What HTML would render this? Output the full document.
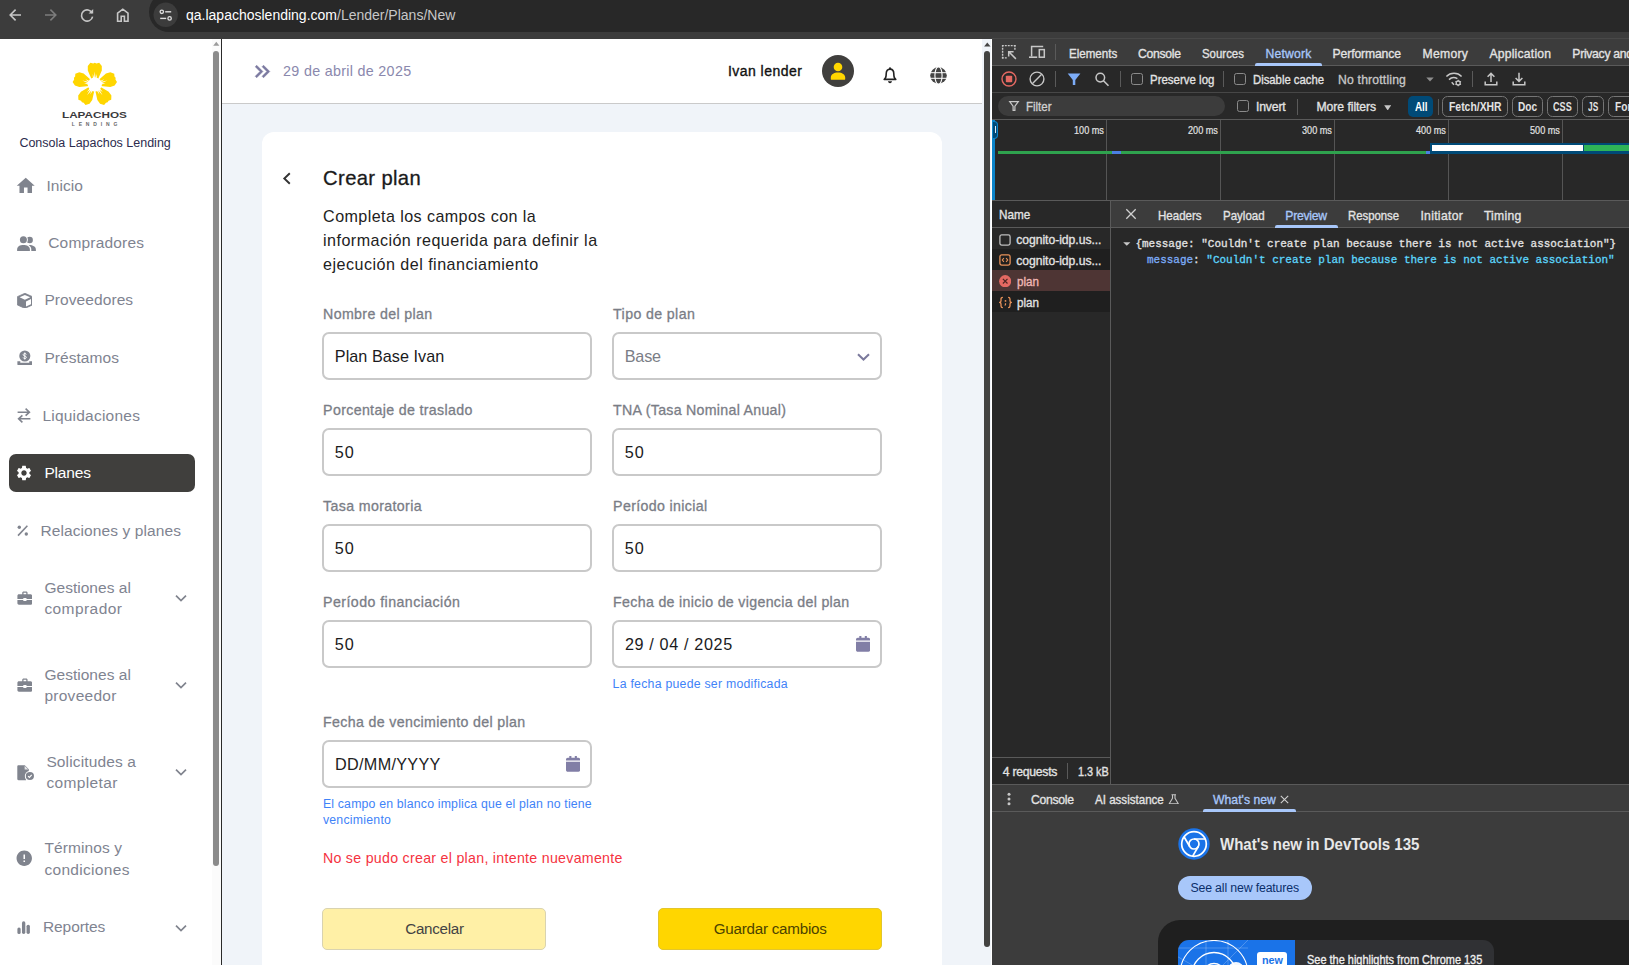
<!DOCTYPE html>
<html lang="es">
<head>
<meta charset="utf-8">
<title>Crear plan</title>
<style>
*{box-sizing:border-box;margin:0;padding:0}
html,body{width:1629px;height:965px;overflow:hidden;background:#fff;font-family:"Liberation Sans",sans-serif}
#root{position:absolute;left:0;top:0;width:1629px;height:965px;overflow:hidden}
.abs{position:absolute}
.t{position:absolute;white-space:nowrap;line-height:1}
</style>
</head>
<body>
<div id="root">
<div class="abs" style="left:0px;top:0px;width:1629px;height:39px;background:#3c3c3c;"></div>
<div class="abs" style="left:149px;top:-8px;width:1500px;height:40px;background:#282828;border-radius:20px;"></div>
<svg class="abs" style="left:0;top:0" width="200" height="39" viewBox="0 0 200 39" fill="none">
<path d="M21 15H10.5M15.6 9.6L10.2 15l5.4 5.4" stroke="#c7c7c7" stroke-width="1.6"/>
<path d="M45 15h10.5M50.4 9.6l5.4 5.4-5.4 5.4" stroke="#7c7c7c" stroke-width="1.6"/>
<path d="M92.2 13.2A5.6 5.6 0 1 0 92.6 16.6" stroke="#c7c7c7" stroke-width="1.6"/>
<path d="M93.2 9v4.600h-4.600z" fill="#c7c7c7"/>
<path d="M117.6 21.2v-8l5.200-4 5.200 4v8h-3.600v-5h-3.200v5z" stroke="#c7c7c7" stroke-width="1.6"/>
<circle cx="165.7" cy="14.8" r="12.2" fill="#3c3c3c"/>
<circle cx="161.8" cy="11.8" r="1.7" stroke="#dedede" stroke-width="1.3"/>
<path d="M165.2 11.8h6" stroke="#dedede" stroke-width="1.4"/>
<circle cx="169.6" cy="18.4" r="1.7" stroke="#dedede" stroke-width="1.3"/>
<path d="M160.2 18.4h6" stroke="#dedede" stroke-width="1.4"/>
</svg>
<div class="t" id="url" style="left:186px;top:8px;font-size:14px;color:#c7c7c7"><span style="color:#fff">qa.lapachoslending.com</span>/Lender/Plans/New</div>
<div class="abs" style="left:0px;top:39px;width:221px;height:926px;background:#fff;"></div>
<svg class="abs" style="left:60px;top:55px;" width="70" height="60" viewBox="0 0 70 60" fill="none"><g transform="translate(34.8,29.6)" fill="#ffd600"><path d="M-3.1,-5 L-7.0,-14.0 L-7.0,-18.6 L-4.4,-21.9 L-1.6,-21.2 L0,-21.9 L1.6,-21.2 L4.4,-21.9 L7.0,-18.6 L7.0,-14.0 L3.1,-5 Z" transform="rotate(0)"/><path d="M-3.1,-5 L-7.0,-14.0 L-7.0,-18.6 L-4.4,-21.9 L-1.6,-21.2 L0,-21.9 L1.6,-21.2 L4.4,-21.9 L7.0,-18.6 L7.0,-14.0 L3.1,-5 Z" transform="rotate(72)"/><path d="M-3.1,-5 L-7.0,-14.0 L-7.0,-18.6 L-4.4,-21.9 L-1.6,-21.2 L0,-21.9 L1.6,-21.2 L4.4,-21.9 L7.0,-18.6 L7.0,-14.0 L3.1,-5 Z" transform="rotate(144)"/><path d="M-3.1,-5 L-7.0,-14.0 L-7.0,-18.6 L-4.4,-21.9 L-1.6,-21.2 L0,-21.9 L1.6,-21.2 L4.4,-21.9 L7.0,-18.6 L7.0,-14.0 L3.1,-5 Z" transform="rotate(216)"/><path d="M-3.1,-5 L-7.0,-14.0 L-7.0,-18.6 L-4.4,-21.9 L-1.6,-21.2 L0,-21.9 L1.6,-21.2 L4.4,-21.9 L7.0,-18.6 L7.0,-14.0 L3.1,-5 Z" transform="rotate(288)"/><polygon points="0.00,-13.20 0.90,-5.00 -0.90,-5.00" fill="#fff"/><polygon points="2.06,-10.60 1.84,-4.74 0.07,-5.08" fill="#fff"/><polygon points="-2.06,-10.60 -0.07,-5.08 -1.84,-4.74" fill="#fff"/><polygon points="12.55,-4.08 5.03,-0.69 4.48,-2.40" fill="#fff"/><polygon points="10.72,-1.32 5.07,0.28 4.85,-1.50" fill="#fff"/><polygon points="9.45,-5.24 4.81,-1.64 3.94,-3.21" fill="#fff"/><polygon points="7.76,10.68 2.21,4.57 3.67,3.52" fill="#fff"/><polygon points="4.56,9.79 1.30,4.91 2.93,4.15" fill="#fff"/><polygon points="7.90,7.37 3.04,4.07 4.27,2.75" fill="#fff"/><polygon points="-7.76,10.68 -3.67,3.52 -2.21,4.57" fill="#fff"/><polygon points="-7.90,7.37 -4.27,2.75 -3.04,4.07" fill="#fff"/><polygon points="-4.56,9.79 -2.93,4.15 -1.30,4.91" fill="#fff"/><polygon points="-12.55,-4.08 -4.48,-2.40 -5.03,-0.69" fill="#fff"/><polygon points="-9.45,-5.24 -3.94,-3.21 -4.81,-1.64" fill="#fff"/><polygon points="-10.72,-1.32 -4.85,-1.50 -5.07,0.28" fill="#fff"/><circle r="7.1" fill="#fff"/></g></svg>
<div class="t" style="left:62.1px;top:110.6px;font-size:8.8px;font-weight:bold;color:#3a3a3c;transform-origin:0 0;transform:scaleX(1.332)">LAPACHOS</div>
<div class="t" style="left:71.8px;top:121.6px;font-size:5px;font-weight:bold;color:#6a6a6a;letter-spacing:3.83px">LENDING</div>
<div class="t" style="left:19.4px;top:137.22px;font-size:12.5px;color:#2c2c4e;letter-spacing:-0.005px;">Consola Lapachos Lending</div>
<svg class="abs" style="left:14.8px;top:175.2px;" width="21.5" height="21.5" viewBox="0 0 24 24" fill="#80848e"><path d="M10 20v-6h4v6h5v-8h3L12 3 2 12h3v8z"/></svg>
<svg class="abs" style="left:16px;top:234px;" width="21" height="18" viewBox="0 0 21 18" fill="#80848e"><circle cx="13.700" cy="6" r="3.200"/><circle cx="7.400" cy="5.700" r="4.500" fill="#fff"/><circle cx="7.400" cy="5.700" r="3.500"/><path d="M1.100 16.900v-1.200C1.100 12.500 4 11.100 7.400 11.100s6.500 1.400 6.500 4.600v1.200z"/><path d="M12.600 11.100c3.900-.2 7.300 1.400 7.300 4.600v1.200h-4.600v-1.500c0-1.700-.9-3.200-2.700-4.300z"/></svg>
<svg class="abs" style="left:16.6px;top:292.6px;" width="15.8" height="15.8" viewBox="0 0 16 16" fill="#80848e"><path d="M8 .3L15.600 3.700v8.400L8 15.600.4 12.100V3.700z" stroke-linejoin="round" stroke="#80848e" stroke-width=".8"/><path d="M8 1.900l5.400 2.400L8 6.800 2.600 4.300z" fill="#fff"/><path d="M9.100 8.500l5.100-2.400v5.200l-5.100 2.400z" fill="#fff"/></svg>
<svg class="abs" style="left:16.8px;top:349.7px;" width="15.6" height="15.6" viewBox="0 0 16 16" fill="#80848e"><circle cx="8" cy="6.200" r="5.700"/><path d="M.4 11.500h3v1.700h9.200v-1.700h3v3.100c0 .6-.5 1.100-1.100 1.100H1.500c-.6 0-1.100-.5-1.100-1.100z"/><path d="M9.600 4.600c-.2-.7-.9-1-1.600-1-.9 0-1.600.5-1.600 1.300 0 1.700 3.200.9 3.200 2.600 0 .8-.7 1.300-1.600 1.300-.8 0-1.500-.4-1.700-1.100M8 2.600v7.200" stroke="#fff" stroke-width="1" fill="none"/></svg>
<svg class="abs" style="left:16.8px;top:408.4px;" width="14" height="15" viewBox="0 0 14 15" fill="none"><path d="M.6 4.200h11.800M8.600 .7l3.800 3.500-3.800 3.500M13.400 10.800H1.600M5.400 7.300L1.600 10.800l3.800 3.500" stroke="#80848e" stroke-width="1.600" fill="none"/></svg>
<div class="abs" style="left:9px;top:454px;width:186px;height:38px;background:#403f3d;border-radius:7px;"></div>
<svg class="abs" style="left:15.4px;top:463.7px;" width="18" height="18" viewBox="0 0 24 24" fill="#fff"><path d="M19.14 12.94c.04-.3.06-.61.06-.94 0-.32-.02-.64-.07-.94l2.03-1.58c.18-.14.23-.41.12-.61l-1.92-3.320c-.12-.22-.37-.29-.59-.22l-2.39.96c-.5-.38-1.03-.7-1.62-.94l-.36-2.54c-.04-.24-.24-.41-.48-.41h-3.84c-.24 0-.43.17-.47.41l-.36 2.54c-.59.24-1.13.57-1.62.94l-2.39-.96c-.22-.08-.47 0-.59.22L2.740 8.870c-.12.21-.08.47.12.61l2.030 1.580c-.05.3-.09.63-.09.94s.02.64.07.94l-2.030 1.580c-.18.14-.23.41-.12.61l1.920 3.320c.12.22.37.29.59.22l2.390-.96c.5.38 1.030.7 1.620.94l.36 2.540c.05.24.24.41.48.41h3.840c.24 0 .44-.17.470-.41l.36-2.540c.59-.24 1.130-.56 1.620-.94l2.390.96c.22.08.47 0 .59-.22l1.920-3.320c.12-.22.07-.47-.12-.61l-2.010-1.580zM12 15.600c-1.980 0-3.600-1.620-3.600-3.600s1.620-3.600 3.600-3.600 3.600 1.620 3.600 3.600-1.620 3.600-3.600 3.600z"/></svg>
<svg class="abs" style="left:16.8px;top:525.2px;" width="11.4" height="11.4" viewBox="0 0 11.4 11.4" fill="#80848e"><circle cx="2.300" cy="2.300" r="1.700"/><circle cx="9.300" cy="9.000" r="1.700"/><path d="M1 10.600L10.400.8" stroke="#80848e" stroke-width="1.600"/></svg>
<svg class="abs" style="left:16.7px;top:591.0px;" width="15.8" height="14.3" viewBox="0 0 16 14.5" fill="#80848e"><path d="M5.300 3.200V1.900C5.300 1.100 5.900.5 6.700.5h2.600c.8 0 1.400.6 1.400 1.400v1.300h3.100c.8 0 1.500.7 1.500 1.500v3.400H9.600V7.200H6.400v.900H.4V4.700c0-.8.700-1.500 1.500-1.500zm1.300 0h2.800V1.900H6.600z"/><path d="M.4 9.200h6v.9h3.200v-.9h6v3.300c0 .8-.7 1.500-1.500 1.500H1.900c-.8 0-1.500-.7-1.500-1.500z"/></svg>
<svg class="abs" style="left:16.7px;top:678.0px;" width="15.8" height="14.3" viewBox="0 0 16 14.5" fill="#80848e"><path d="M5.300 3.200V1.900C5.300 1.100 5.900.5 6.700.5h2.600c.8 0 1.400.6 1.400 1.400v1.300h3.100c.8 0 1.500.7 1.500 1.500v3.400H9.600V7.200H6.400v.900H.4V4.700c0-.8.700-1.500 1.500-1.500zm1.300 0h2.800V1.900H6.600z"/><path d="M.4 9.200h6v.9h3.200v-.9h6v3.300c0 .8-.7 1.500-1.500 1.500H1.900c-.8 0-1.500-.7-1.500-1.500z"/></svg>
<svg class="abs" style="left:16.8px;top:764.6px;" width="18.2" height="16.2" viewBox="0 0 18.2 16.2" fill="#80848e"><path d="M1.500 .3h6.300l4 4v4.500a4.800 4.800 0 0 0-2.700 6.500H1.500c-.7 0-1.200-.5-1.200-1.200V1.500c0-.7.5-1.200 1.200-1.200z"/><path d="M7.600 .8v3.700h3.700z" fill="#fff" opacity=".8"/><circle cx="12.900" cy="11.000" r="5.100" fill="#fff"/><circle cx="12.900" cy="11.000" r="4.100"/><path d="M11.100 11.100l1.300 1.300 2.300-2.500" stroke="#fff" stroke-width="1.100" fill="none"/></svg>
<svg class="abs" style="left:15.35px;top:849.25px;" width="18.5" height="18.5" viewBox="0 0 24 24" fill="#80848e"><path d="M12 2C6.480 2 2 6.480 2 12s4.480 10 10 10 10-4.480 10-10S17.520 2 12 2zm1 15h-2v-2h2v2zm0-4h-2V7h2v6z"/></svg>
<svg class="abs" style="left:16.9px;top:921.0px;" width="13.2" height="13.2" viewBox="0 0 13 13" fill="#80848e"><rect x=".4" y="6.400" width="3.200" height="6.400" rx="1.500"/><rect x="4.900" y=".3" width="3.300" height="12.500" rx="1.600"/><rect x="9.400" y="3.600" width="3.300" height="9.200" rx="1.600"/></svg>
<svg class="abs" style="left:174.5px;top:594.1px;" width="12" height="9" viewBox="0 0 12 9" fill="none"><path d="M1 1.600l5 5 5-5" stroke="#80848e" stroke-width="1.700"/></svg>
<svg class="abs" style="left:174.5px;top:681.1px;" width="12" height="9" viewBox="0 0 12 9" fill="none"><path d="M1 1.600l5 5 5-5" stroke="#80848e" stroke-width="1.700"/></svg>
<svg class="abs" style="left:174.5px;top:768.1px;" width="12" height="9" viewBox="0 0 12 9" fill="none"><path d="M1 1.600l5 5 5-5" stroke="#80848e" stroke-width="1.700"/></svg>
<svg class="abs" style="left:174.5px;top:923.5px;" width="12" height="9" viewBox="0 0 12 9" fill="none"><path d="M1 1.600l5 5 5-5" stroke="#80848e" stroke-width="1.700"/></svg>
<div class="t" style="left:46.4px;top:177.68px;font-size:15.5px;color:#7f8491;letter-spacing:0.063px;">Inicio</div>
<div class="t" style="left:48.2px;top:234.68px;font-size:15.5px;color:#7f8491;letter-spacing:0.190px;">Compradores</div>
<div class="t" style="left:44.4px;top:292.18px;font-size:15.5px;color:#7f8491;letter-spacing:0.082px;">Proveedores</div>
<div class="t" style="left:44.4px;top:349.68px;font-size:15.5px;color:#7f8491;letter-spacing:0.053px;">Préstamos</div>
<div class="t" style="left:42.4px;top:407.88px;font-size:15.5px;color:#7f8491;letter-spacing:0.226px;">Liquidaciones</div>
<div class="t" style="left:44.4px;top:464.68px;font-size:15.5px;color:#fff;letter-spacing:-0.179px;">Planes</div>
<div class="t" style="left:40.4px;top:523.08px;font-size:15.5px;color:#7f8491;letter-spacing:0.099px;">Relaciones y planes</div>
<div class="t" style="left:44.4px;top:579.78px;font-size:15.5px;color:#7f8491;letter-spacing:0.031px;">Gestiones al</div>
<div class="t" style="left:44.4px;top:600.68px;font-size:15.5px;color:#7f8491;letter-spacing:0.427px;">comprador</div>
<div class="t" style="left:44.4px;top:666.68px;font-size:15.5px;color:#7f8491;letter-spacing:0.031px;">Gestiones al</div>
<div class="t" style="left:44.4px;top:687.58px;font-size:15.5px;color:#7f8491;letter-spacing:0.276px;">proveedor</div>
<div class="t" style="left:46.4px;top:753.88px;font-size:15.5px;color:#7f8491;letter-spacing:0.135px;">Solicitudes a</div>
<div class="t" style="left:46.4px;top:774.78px;font-size:15.5px;color:#7f8491;letter-spacing:0.368px;">completar</div>
<div class="t" style="left:44.4px;top:839.58px;font-size:15.5px;color:#7f8491;letter-spacing:0.094px;">Términos y</div>
<div class="t" style="left:44.4px;top:861.58px;font-size:15.5px;color:#7f8491;letter-spacing:0.314px;">condiciones</div>
<div class="t" style="left:43px;top:919.08px;font-size:15.5px;color:#7f8491;letter-spacing:-0.099px;">Reportes</div>
<div class="abs" style="left:211.5px;top:39px;width:9.5px;height:926px;background:#fbfbfb;"></div>
<div class="abs" style="left:212.8px;top:51px;width:6.2px;height:815.4px;background:#8b8b8b;border-radius:3.100px;"></div>
<svg class="abs" style="left:213px;top:41px" width="7" height="6" viewBox="0 0 7 6"><path d="M3.300 .800L6.400 4.800H.2z" fill="#9b9b9b"/></svg>
<div class="abs" style="left:221px;top:39px;width:1.3px;height:926px;background:#2a2a2a;"></div>
<div class="abs" style="left:222.3px;top:39px;width:769px;height:926px;background:#f0f4f9;"></div>
<div class="abs" style="left:222.3px;top:39px;width:760px;height:64px;background:#fff;"></div>
<div class="abs" style="left:222.3px;top:103px;width:760px;height:1px;background:#cacaca;"></div>
<svg class="abs" style="left:250px;top:58.8px;" width="25" height="25" viewBox="0 0 24 24" fill="#7b79a0"><path stroke="#7b79a0" stroke-width=".5" d="M6.410 6L5 7.410 9.580 12 5 16.590 6.410 18l6-6z M13 6l-1.410 1.410L16.170 12l-4.580 4.590L13 18l6-6z"/></svg>
<div class="t" style="left:283.1px;top:63.90px;font-size:14.3px;color:#8a88ad;letter-spacing:0.310px;">29 de abril de 2025</div>
<div class="t" style="left:727.9px;top:64.25px;font-size:14px;color:#111;letter-spacing:0.463px;-webkit-text-stroke:.35px #111;">Ivan lender</div>
<div class="abs" style="left:821.700px;top:54.800px;width:32.400px;height:32.400px;border-radius:50%;background:#403f3d"></div>
<svg class="abs" style="left:829.9px;top:62px;" width="16" height="18" viewBox="0 0 16 18" fill="#ffd600"><circle cx="8" cy="5" r="4.300"/><path d="M.8 17.200v-1.600c0-3 3.200-5 7.200-5s7.200 2 7.200 5v1.600c0 .3-.2.500-.5.500H1.300c-.3 0-.5-.2-.5-.5z"/></svg>
<svg class="abs" style="left:883px;top:66.6px;" width="14" height="17" viewBox="0 0 14 17" fill="none"><circle cx="7" cy="1.200" r="1" fill="#222"/><path d="M1.200 12.400L2.700 10.500C3.100 9.200 3.200 8 3.200 6.800 3.200 3.900 4.700 2.100 7 2.100s3.800 1.800 3.800 4.700c0 1.200.1 2.400.5 3.700l1.500 1.900z" stroke="#222" stroke-width="1.600" stroke-linejoin="round"/><path d="M5 14.300h4c0 1.100-.9 1.900-2 1.900s-2-.8-2-1.900z" fill="#222"/></svg>
<svg class="abs" style="left:929.6px;top:66.5px;" width="17" height="17" viewBox="0 0 17 17" fill="none"><circle cx="8.500" cy="8.500" r="8.300" fill="#444"/><path d="M0 5.700h17M0 11.300h17" stroke="#fff" stroke-width="1"/><ellipse cx="8.500" cy="8.500" rx="3.600" ry="8.800" stroke="#fff" stroke-width="1.100"/></svg>
<div class="abs" style="left:261.8px;top:131.8px;width:680.4px;height:900px;background:#fff;border-radius:12px;"></div>
<svg class="abs" style="left:281px;top:171.5px;" width="13" height="13" viewBox="0 0 13 13" fill="none"><path d="M8.800 1.200L3.300 6.500l5.500 5.300" stroke="#333" stroke-width="1.900"/></svg>
<div class="t" style="left:323.1px;top:167.60px;font-size:20.2px;color:#1a1a1a;letter-spacing:0.372px;-webkit-text-stroke:.3px #1a1a1a;">Crear plan</div>
<div class="t" style="left:323.1px;top:208.17px;font-size:16.1px;color:#222;letter-spacing:0.418px;">Completa los campos con la</div>
<div class="t" style="left:323.1px;top:232.17px;font-size:16.1px;color:#222;letter-spacing:0.454px;">información requerida para definir la</div>
<div class="t" style="left:323.1px;top:256.17px;font-size:16.1px;color:#222;letter-spacing:0.474px;">ejecución del financiamiento</div>
<div class="t" style="left:323.1px;top:306.98px;font-size:14.2px;color:#7a7d86;letter-spacing:0.357px;-webkit-text-stroke:.3px #7a7d86;">Nombre del plan</div>
<div class="t" style="left:613.1px;top:306.98px;font-size:14.2px;color:#7a7d86;letter-spacing:0.376px;-webkit-text-stroke:.3px #7a7d86;">Tipo de plan</div>
<div class="abs" style="left:322px;top:332px;width:270px;height:48px;border:2px solid #c9c9c9;border-radius:7px;background:#fff"></div>
<div class="abs" style="left:612px;top:332px;width:270px;height:48px;border:2px solid #c9c9c9;border-radius:7px;background:#fff"></div>
<div class="t" style="left:334.8px;top:348.29px;font-size:16.2px;color:#1b1b1d;letter-spacing:0.047px;">Plan Base Ivan</div>
<div class="t" style="left:624.8px;top:348.29px;font-size:16.2px;color:#7a7d86;letter-spacing:-0.232px;">Base</div>
<svg class="abs" style="left:856.6px;top:352.7px;" width="13" height="8" viewBox="0 0 13 8" fill="none"><path d="M1 1.200l5.500 5.300L12 1.200" stroke="#7b799c" stroke-width="2"/></svg>
<div class="t" style="left:323.1px;top:402.98px;font-size:14.2px;color:#7a7d86;letter-spacing:0.345px;-webkit-text-stroke:.3px #7a7d86;">Porcentaje de traslado</div>
<div class="t" style="left:613.1px;top:402.98px;font-size:14.2px;color:#7a7d86;letter-spacing:0.281px;-webkit-text-stroke:.3px #7a7d86;">TNA (Tasa Nominal Anual)</div>
<div class="abs" style="left:322px;top:428px;width:270px;height:48px;border:2px solid #c9c9c9;border-radius:7px;background:#fff"></div>
<div class="abs" style="left:612px;top:428px;width:270px;height:48px;border:2px solid #c9c9c9;border-radius:7px;background:#fff"></div>
<div class="t" style="left:334.8px;top:444.29px;font-size:16.2px;color:#1b1b1d;letter-spacing:0.995px;">50</div>
<div class="t" style="left:624.8px;top:444.29px;font-size:16.2px;color:#1b1b1d;letter-spacing:0.995px;">50</div>
<div class="t" style="left:323.1px;top:498.98px;font-size:14.2px;color:#7a7d86;letter-spacing:0.359px;-webkit-text-stroke:.3px #7a7d86;">Tasa moratoria</div>
<div class="t" style="left:613.1px;top:498.98px;font-size:14.2px;color:#7a7d86;letter-spacing:0.349px;-webkit-text-stroke:.3px #7a7d86;">Período inicial</div>
<div class="abs" style="left:322px;top:524px;width:270px;height:48px;border:2px solid #c9c9c9;border-radius:7px;background:#fff"></div>
<div class="abs" style="left:612px;top:524px;width:270px;height:48px;border:2px solid #c9c9c9;border-radius:7px;background:#fff"></div>
<div class="t" style="left:334.8px;top:540.29px;font-size:16.2px;color:#1b1b1d;letter-spacing:0.995px;">50</div>
<div class="t" style="left:624.8px;top:540.29px;font-size:16.2px;color:#1b1b1d;letter-spacing:0.995px;">50</div>
<div class="t" style="left:323.1px;top:594.98px;font-size:14.2px;color:#7a7d86;letter-spacing:0.434px;-webkit-text-stroke:.3px #7a7d86;">Período financiación</div>
<div class="t" style="left:613.1px;top:594.98px;font-size:14.2px;color:#7a7d86;letter-spacing:0.323px;-webkit-text-stroke:.3px #7a7d86;">Fecha de inicio de vigencia del plan</div>
<div class="abs" style="left:322px;top:620px;width:270px;height:48px;border:2px solid #c9c9c9;border-radius:7px;background:#fff"></div>
<div class="abs" style="left:612px;top:620px;width:270px;height:48px;border:2px solid #c9c9c9;border-radius:7px;background:#fff"></div>
<div class="t" style="left:334.8px;top:636.29px;font-size:16.2px;color:#1b1b1d;letter-spacing:0.995px;">50</div>
<div class="t" style="left:624.9px;top:636.29px;font-size:16.2px;color:#1b1b1d;letter-spacing:0.638px;">29 / 04 / 2025</div>
<svg class="abs" style="left:856px;top:636.2px;" width="14.2" height="15.8" viewBox="0 0 14.2 15.8" fill="#817ea6"><path d="M3.300 0h2.100v1.800h3.400V0h2.100v1.800h1.500c1 0 1.800.8 1.800 1.800v.900H0v-.900c0-1 .8-1.800 1.800-1.800h1.500z"/><path d="M0 5.700h14.200v8.300c0 1-.8 1.800-1.800 1.800H1.800c-1 0-1.800-.8-1.800-1.800z"/></svg>
<div class="t" style="left:612.6px;top:678.29px;font-size:12.3px;color:#3f83f8;letter-spacing:0.244px;">La fecha puede ser modificada</div>
<div class="t" style="left:323.1px;top:715.08px;font-size:14.2px;color:#7a7d86;letter-spacing:0.341px;-webkit-text-stroke:.3px #7a7d86;">Fecha de vencimiento del plan</div>
<div class="abs" style="left:322px;top:740px;width:270px;height:48px;border:2px solid #c9c9c9;border-radius:7px;background:#fff"></div>
<div class="t" style="left:335px;top:755.99px;font-size:16.2px;color:#222;letter-spacing:0.319px;">DD/MM/YYYY</div>
<svg class="abs" style="left:566.1px;top:756px;" width="14.2" height="15.8" viewBox="0 0 14.2 15.8" fill="#817ea6"><path d="M3.300 0h2.100v1.800h3.400V0h2.100v1.800h1.500c1 0 1.800.8 1.800 1.800v.900H0v-.900c0-1 .8-1.800 1.800-1.800h1.500z"/><path d="M0 5.700h14.200v8.300c0 1-.8 1.800-1.800 1.800H1.800c-1 0-1.800-.8-1.800-1.800z"/></svg>
<div class="t" style="left:322.9px;top:798.39px;font-size:12.3px;color:#3f83f8;letter-spacing:0.182px;">El campo en blanco implica que el plan no tiene</div>
<div class="t" style="left:322.9px;top:814.39px;font-size:12.3px;color:#3f83f8;letter-spacing:0.238px;">vencimiento</div>
<div class="t" style="left:322.9px;top:850.78px;font-size:14.2px;color:#f5333f;letter-spacing:0.289px;">No se pudo crear el plan, intente nuevamente</div>
<div class="abs" style="left:322px;top:908px;width:224px;height:42px;border:1px solid #d9d3b0;border-radius:5px;background:#fff0a6"></div>
<div class="abs" style="left:658px;top:908px;width:224px;height:42px;border:1px solid #e3c62c;border-radius:5px;background:#ffd600"></div>
<div class="t" style="left:405.3px;top:921.43px;font-size:15.2px;color:#444;letter-spacing:-0.297px;">Cancelar</div>
<div class="t" style="left:713.8px;top:921.43px;font-size:15.2px;color:#4d4300;letter-spacing:-0.249px;">Guardar cambios</div>
<div class="abs" style="left:982px;top:39px;width:9px;height:926px;background:#f0f4f9;"></div>
<svg class="abs" style="left:984px;top:42px" width="7" height="6" viewBox="0 0 7 6"><path d="M3.300 .600L6.500 4.600H.1z" fill="#444"/></svg>
<div class="abs" style="left:984px;top:51px;width:6px;height:895.8px;background:#434341;border-radius:3px;"></div>
<div class="abs" style="left:990.8px;top:39px;width:1.5px;height:926px;background:#fff;"></div>
<div class="abs" style="left:992.2px;top:39px;width:637px;height:926px;background:#282828;"></div>
<div class="abs" style="left:992.2px;top:39px;width:637px;height:26.4px;background:#3c3c3c;"></div>
<div class="abs" style="left:992.2px;top:38px;width:637px;height:1px;background:#484848;"></div>
<div class="abs" style="left:992.2px;top:65.2px;width:637px;height:1px;background:#5a5a5a;"></div>
<svg class="abs" style="left:1000px;top:43px;" width="18" height="18" viewBox="0 0 18 18" fill="none"><path d="M1.900 2.600H15.600M2.600 1.900V15.600" stroke="#c7c7c7" stroke-width="1.400" stroke-dasharray="1.900 1.050"/><path d="M14.900 1.900V6.750M1.900 14.900H6.750" stroke="#c7c7c7" stroke-width="1.400" stroke-dasharray="1.900 1.050"/><path d="M9.300 9.300l6.600 6.600M8.700 13.600V8.700h4.900" stroke="#c7c7c7" stroke-width="1.500"/></svg>
<svg class="abs" style="left:1028px;top:44px;" width="18" height="16" viewBox="0 0 18 16" fill="none"><path d="M3.600 12.400V2.500h11.600" stroke="#c7c7c7" stroke-width="1.500"/><path d="M1 13.200h8.200" stroke="#c7c7c7" stroke-width="1.600"/><rect x="11.300" y="5.600" width="5" height="7.600" stroke="#c7c7c7" stroke-width="1.500"/></svg>
<div class="abs" style="left:1055.2px;top:44px;width:1px;height:15.6px;background:#5a5a5a;"></div>
<div class="t" style="left:1068.6px;top:47.87px;font-size:12.2px;color:#e3e3e3;transform-origin:0 50%;transform:scaleX(0.9488);-webkit-text-stroke:0.32px #e3e3e3;">Elements</div>
<div class="t" style="left:1138px;top:47.87px;font-size:12.2px;color:#e3e3e3;letter-spacing:-0.286px;-webkit-text-stroke:0.32px #e3e3e3;">Console</div>
<div class="t" style="left:1202.2px;top:47.87px;font-size:12.2px;color:#e3e3e3;transform-origin:0 50%;transform:scaleX(0.9372);-webkit-text-stroke:0.32px #e3e3e3;">Sources</div>
<div class="t" style="left:1265.5px;top:47.87px;font-size:12.2px;color:#a8c7fa;letter-spacing:0.184px;-webkit-text-stroke:0.32px #a8c7fa;">Network</div>
<div class="abs" style="left:1255.3px;top:62.6px;width:66.5px;height:3px;background:#a8c7fa;border-radius:2px 2px 0 0;"></div>
<div class="t" style="left:1332.6px;top:47.87px;font-size:12.2px;color:#e3e3e3;letter-spacing:-0.137px;-webkit-text-stroke:0.32px #e3e3e3;">Performance</div>
<div class="t" style="left:1422.6px;top:47.87px;font-size:12.2px;color:#e3e3e3;letter-spacing:0.237px;-webkit-text-stroke:0.32px #e3e3e3;">Memory</div>
<div class="t" style="left:1489.4px;top:47.87px;font-size:12.2px;color:#e3e3e3;letter-spacing:0.208px;-webkit-text-stroke:0.32px #e3e3e3;">Application</div>
<div class="t" style="left:1572.3px;top:47.87px;font-size:12.2px;color:#e3e3e3;letter-spacing:-0.292px;-webkit-text-stroke:0.32px #e3e3e3;">Privacy and security</div>
<div class="abs" style="left:992.2px;top:92.2px;width:637px;height:1px;background:#474747;"></div>
<svg class="abs" style="left:1000px;top:70px;" width="18" height="18" viewBox="0 0 18 18" fill="none"><circle cx="9" cy="9" r="7" stroke="#e46962" stroke-width="1.400"/><rect x="5.800" y="5.800" width="6.400" height="6.400" rx=".8" fill="#e46962"/></svg>
<svg class="abs" style="left:1028px;top:70px;" width="18" height="18" viewBox="0 0 18 18" fill="none"><circle cx="9" cy="9" r="6.900" stroke="#c7c7c7" stroke-width="1.400"/><path d="M4.300 13.700L13.700 4.300" stroke="#c7c7c7" stroke-width="1.400"/></svg>
<div class="abs" style="left:1055.2px;top:71px;width:1px;height:16px;background:#5a5a5a;"></div>
<svg class="abs" style="left:1066px;top:71px;" width="16" height="16" viewBox="0 0 16 16" fill="none"><path d="M1.700 2.400h12.700L9.300 8.900v5H6.800v-5z" fill="#7cacf8"/></svg>
<svg class="abs" style="left:1094px;top:71px;" width="16" height="16" viewBox="0 0 16 16" fill="none"><circle cx="6.300" cy="6.600" r="4.300" stroke="#c7c7c7" stroke-width="1.500"/><path d="M9.500 9.800l5 5" stroke="#c7c7c7" stroke-width="1.600"/></svg>
<div class="abs" style="left:1120.4px;top:71px;width:1px;height:16px;background:#5a5a5a;"></div>
<div class="abs" style="left:1131px;top:73.3px;width:12px;height:12px;border:1.2px solid #8a8a8a;border-radius:2.500px;background:#2b2b2b"></div>
<div class="t" style="left:1149.6px;top:74.17px;font-size:12.2px;color:#e3e3e3;transform-origin:0 50%;transform:scaleX(0.9413);-webkit-text-stroke:0.32px #e3e3e3;">Preserve log</div>
<div class="abs" style="left:1223px;top:71px;width:1px;height:16px;background:#5a5a5a;"></div>
<div class="abs" style="left:1234.2px;top:73.3px;width:12px;height:12px;border:1.2px solid #8a8a8a;border-radius:2.500px;background:#2b2b2b"></div>
<div class="t" style="left:1252.7px;top:74.17px;font-size:12.2px;color:#e3e3e3;transform-origin:0 50%;transform:scaleX(0.9275);-webkit-text-stroke:0.32px #e3e3e3;">Disable cache</div>
<div class="t" style="left:1338.1px;top:74.17px;font-size:12.2px;color:#c7c7c7;letter-spacing:0.174px;-webkit-text-stroke:0.32px #c7c7c7;">No throttling</div>
<svg class="abs" style="left:1426px;top:77px;" width="8" height="5" viewBox="0 0 8 5" fill="none"><path d="M.3 .4h7.400L4 4.400z" fill="#8f8f8f"/></svg>
<svg class="abs" style="left:1445px;top:71px;" width="18" height="16" viewBox="0 0 18 16" fill="none"><path d="M1.400 5.600a10.500 10.500 0 0 1 15.200 0M4 8.600a6.800 6.800 0 0 1 8.400-.9" stroke="#c7c7c7" stroke-width="1.500"/><path d="M6.700 11.300L9 13.800" stroke="#c7c7c7" stroke-width="1.500"/><circle cx="13.200" cy="12" r="2" stroke="#c7c7c7" stroke-width="1.300"/><path d="M13.200 8.800v1.100M13.200 14.100v1.100M10.400 10.400l1 .6M15 13l1 .6M10.400 13.600l1-.6M15 11l1-.6" stroke="#c7c7c7" stroke-width="1.100"/></svg>
<div class="abs" style="left:1472.3px;top:71px;width:1px;height:16px;background:#5a5a5a;"></div>
<svg class="abs" style="left:1483px;top:71px;" width="16" height="16" viewBox="0 0 16 16" fill="none"><path d="M8 11V2.600M4.600 5.800L8 2.400l3.400 3.400" stroke="#c7c7c7" stroke-width="1.500"/><path d="M2.200 10.600v3.200h11.600v-3.200" stroke="#c7c7c7" stroke-width="1.500"/></svg>
<svg class="abs" style="left:1511px;top:71px;" width="16" height="16" viewBox="0 0 16 16" fill="none"><path d="M8 1.800v8.400M4.600 7L8 10.400 11.400 7" stroke="#c7c7c7" stroke-width="1.500"/><path d="M2.200 10.600v3.200h11.600v-3.200" stroke="#c7c7c7" stroke-width="1.500"/></svg>
<div class="abs" style="left:992.2px;top:118.6px;width:637px;height:1px;background:#5a5a5a;"></div>
<div class="abs" style="left:997.9px;top:96.4px;width:227px;height:19.8px;background:#3c3c3c;border-radius:10px;"></div>
<svg class="abs" style="left:1008px;top:100.3px;" width="12" height="12" viewBox="0 0 12 12" fill="none"><path d="M1.700 1.700h8.600L6.900 6.200v4.200H5.100V6.200z" stroke="#c7c7c7" stroke-width="1.200"/></svg>
<div class="t" style="left:1026.4px;top:100.87px;font-size:12.2px;color:#d0d0d0;transform-origin:0 50%;transform:scaleX(0.9416);-webkit-text-stroke:0.32px #d0d0d0;">Filter</div>
<div class="abs" style="left:1237px;top:100.2px;width:12px;height:12px;border:1.2px solid #8a8a8a;border-radius:2.500px;background:#2b2b2b"></div>
<div class="t" style="left:1255.9px;top:100.87px;font-size:12.2px;color:#e3e3e3;letter-spacing:-0.136px;-webkit-text-stroke:0.32px #e3e3e3;">Invert</div>
<div class="abs" style="left:1297.3px;top:99px;width:1px;height:16px;background:#5a5a5a;"></div>
<div class="t" style="left:1316.5px;top:100.87px;font-size:12.2px;color:#e3e3e3;letter-spacing:-0.052px;-webkit-text-stroke:0.32px #e3e3e3;">More filters</div>
<svg class="abs" style="left:1383.5px;top:104.6px;" width="7.4" height="5.8" viewBox="0 0 7.4 5.800" fill="none"><path d="M.2 .3h7L3.700 5.500z" fill="#c7c7c7"/></svg>
<div class="abs" style="left:1408.2px;top:96.4px;width:24.6px;height:20.2px;background:#004a77;border-radius:5px;"></div>
<div class="t" style="left:1414.7px;top:100.87px;font-size:12.2px;color:#fff;font-weight:bold;transform-origin:0 50%;transform:scaleX(0.8091);">All</div>
<div class="abs" style="left:1437.5px;top:99px;width:1px;height:16px;background:#5a5a5a;"></div>
<div class="abs" style="left:1442px;top:96.400px;width:65.8px;height:20.200px;border:1px solid #757575;border-radius:5.500px"></div>
<div class="t" style="left:1448.9px;top:100.87px;font-size:12.2px;color:#e3e3e3;font-weight:bold;transform-origin:0 50%;transform:scaleX(0.8536);">Fetch/XHR</div>
<div class="abs" style="left:1512.3px;top:96.400px;width:30.5px;height:20.200px;border:1px solid #757575;border-radius:5.500px"></div>
<div class="t" style="left:1517.8px;top:100.87px;font-size:12.2px;color:#e3e3e3;font-weight:bold;transform-origin:0 50%;transform:scaleX(0.8296);">Doc</div>
<div class="abs" style="left:1547.1px;top:96.400px;width:30.5px;height:20.200px;border:1px solid #757575;border-radius:5.500px"></div>
<div class="t" style="left:1553.2px;top:100.87px;font-size:12.2px;color:#e3e3e3;font-weight:bold;transform-origin:0 50%;transform:scaleX(0.7462);">CSS</div>
<div class="abs" style="left:1582.1px;top:96.400px;width:21.6px;height:20.200px;border:1px solid #757575;border-radius:5.500px"></div>
<div class="t" style="left:1588px;top:100.87px;font-size:12.2px;color:#e3e3e3;font-weight:bold;transform-origin:0 50%;transform:scaleX(0.6842);">JS</div>
<div class="abs" style="left:1608.2px;top:96.400px;width:40px;height:20.200px;border:1px solid #757575;border-radius:5.500px"></div>
<div class="t" style="left:1614.5px;top:100.87px;font-size:12.2px;color:#e3e3e3;font-weight:bold;transform-origin:0 50%;transform:scaleX(0.8336);">Font</div>
<div class="abs" style="left:1106.1px;top:119.6px;width:1px;height:80.4px;background:#555;"></div>
<div class="abs" style="left:1220.0px;top:119.6px;width:1px;height:80.4px;background:#555;"></div>
<div class="abs" style="left:1334.0px;top:119.6px;width:1px;height:80.4px;background:#555;"></div>
<div class="abs" style="left:1448.0px;top:119.6px;width:1px;height:80.4px;background:#555;"></div>
<div class="abs" style="left:1561.9px;top:119.6px;width:1px;height:80.4px;background:#555;"></div>
<div class="t" style="left:1074.1px;top:124.89px;font-size:11px;color:#e3e3e3;transform-origin:0 50%;transform:scaleX(0.8289);-webkit-text-stroke:0.2px #e3e3e3;">100 ms</div>
<div class="t" style="left:1188.0px;top:124.89px;font-size:11px;color:#e3e3e3;transform-origin:0 50%;transform:scaleX(0.8289);-webkit-text-stroke:0.2px #e3e3e3;">200 ms</div>
<div class="t" style="left:1302.0px;top:124.89px;font-size:11px;color:#e3e3e3;transform-origin:0 50%;transform:scaleX(0.8289);-webkit-text-stroke:0.2px #e3e3e3;">300 ms</div>
<div class="t" style="left:1416.0px;top:124.89px;font-size:11px;color:#e3e3e3;transform-origin:0 50%;transform:scaleX(0.8289);-webkit-text-stroke:0.2px #e3e3e3;">400 ms</div>
<div class="t" style="left:1529.9px;top:124.89px;font-size:11px;color:#e3e3e3;transform-origin:0 50%;transform:scaleX(0.8289);-webkit-text-stroke:0.2px #e3e3e3;">500 ms</div>
<div class="abs" style="left:992.2px;top:119.6px;width:3px;height:80.4px;background:#0b84c9;"></div>
<div class="abs" style="left:992.6px;top:120.8px;width:5.4px;height:18px;background:#004a77;border-radius:0 4px 4px 0;border:1px solid #0b84c9;border-left:none;"></div>
<div class="abs" style="left:994.6px;top:126px;width:1px;height:7px;background:#dfe9f5;"></div>
<div class="abs" style="left:998px;top:151px;width:428.3px;height:2.7px;background:#2fa24e;"></div>
<div class="abs" style="left:1111.5px;top:151px;width:9.6px;height:2.7px;background:#4b7fe3;"></div>
<div class="abs" style="left:1426.3px;top:151px;width:9.4px;height:2.7px;background:#4b7fe3;"></div>
<div class="abs" style="left:1430.4px;top:143.4px;width:200px;height:10.4px;background:#004a77;"></div>
<div class="abs" style="left:1432.4px;top:145.4px;width:150.8px;height:5.5px;background:#fff;"></div>
<div class="abs" style="left:1583.5px;top:145.4px;width:46px;height:5.5px;background:#2fb457;"></div>
<div class="abs" style="left:992.2px;top:199.8px;width:637px;height:1px;background:#5a5a5a;"></div>
<div class="abs" style="left:1111px;top:200.8px;width:518px;height:26.4px;background:#3c3c3c;"></div>
<div class="abs" style="left:992.2px;top:227.2px;width:637px;height:1px;background:#5a5a5a;"></div>
<div class="abs" style="left:1110px;top:200.8px;width:1px;height:583px;background:#5a5a5a;"></div>
<div class="t" style="left:998.5px;top:209.47px;font-size:12.2px;color:#e3e3e3;transform-origin:0 50%;transform:scaleX(0.9597);-webkit-text-stroke:0.32px #e3e3e3;">Name</div>
<svg class="abs" style="left:1125px;top:208.2px;" width="12" height="12" viewBox="0 0 12 12" fill="none"><path d="M1.300 1.300l9.400 9.400M10.700 1.300l-9.400 9.400" stroke="#d0d0d0" stroke-width="1.300"/></svg>
<div class="t" style="left:1157.6px;top:210.47px;font-size:12.2px;color:#e3e3e3;transform-origin:0 50%;transform:scaleX(0.9465);-webkit-text-stroke:0.32px #e3e3e3;">Headers</div>
<div class="t" style="left:1222.5px;top:210.47px;font-size:12.2px;color:#e3e3e3;transform-origin:0 50%;transform:scaleX(0.9445);-webkit-text-stroke:0.32px #e3e3e3;">Payload</div>
<div class="t" style="left:1285.3px;top:210.47px;font-size:12.2px;color:#a8c7fa;letter-spacing:-0.258px;-webkit-text-stroke:0.32px #a8c7fa;">Preview</div>
<div class="abs" style="left:1274.9px;top:224.6px;width:63.2px;height:3px;background:#a8c7fa;border-radius:2px 2px 0 0;"></div>
<div class="t" style="left:1348.3px;top:210.47px;font-size:12.2px;color:#e3e3e3;transform-origin:0 50%;transform:scaleX(0.9311);-webkit-text-stroke:0.32px #e3e3e3;">Response</div>
<div class="t" style="left:1420.4px;top:210.47px;font-size:12.2px;color:#e3e3e3;letter-spacing:0.304px;-webkit-text-stroke:0.32px #e3e3e3;">Initiator</div>
<div class="t" style="left:1483.9px;top:210.47px;font-size:12.2px;color:#e3e3e3;letter-spacing:0.237px;-webkit-text-stroke:0.32px #e3e3e3;">Timing</div>
<div class="abs" style="left:992.2px;top:249.15px;width:117.8px;height:20.85px;background:#1f1f1f;"></div>
<div class="abs" style="left:992.2px;top:270.0px;width:117.8px;height:20.85px;background:#4e3534;"></div>
<div class="abs" style="left:992.2px;top:290.85px;width:117.8px;height:20.85px;background:#1f1f1f;"></div>
<svg class="abs" style="left:999px;top:233.5px;" width="12" height="12" viewBox="0 0 12 12" fill="none"><rect x=".9" y=".9" width="10.200" height="10.200" rx="1.800" stroke="#bdbdbd" stroke-width="1.300"/></svg>
<svg class="abs" style="left:999px;top:254.3px;" width="12" height="12" viewBox="0 0 12 12" fill="none"><rect x=".9" y=".9" width="10.200" height="10.200" rx="1.800" stroke="#e8925a" stroke-width="1.300"/><path d="M4.900 4.200L3.300 6l1.600 1.800M7.100 4.200L8.700 6 7.100 7.800" stroke="#e8925a" stroke-width="1.100"/></svg>
<svg class="abs" style="left:998.8px;top:275.0px;" width="12.4" height="12.4" viewBox="0 0 12.400 12.400" fill="none"><circle cx="6.200" cy="6.200" r="6.100" fill="#e46962"/><path d="M3.900 3.900l4.600 4.600M8.500 3.900L3.900 8.500" stroke="#4e2624" stroke-width="1.200"/></svg>
<svg class="abs" style="left:998.6px;top:295.6px;" width="13" height="13" viewBox="0 0 13 13" fill="none"><path d="M3.900 1.300c-1.300 0-1.900.5-1.900 1.700v1.700c0 .9-.4 1.400-1.300 1.700.9.300 1.300.8 1.300 1.700V10c0 1.200.6 1.700 1.900 1.700M9.100 1.300c1.300 0 1.900.5 1.900 1.700v1.700c0 .9.400 1.400 1.300 1.700-.9.300-1.300.8-1.300 1.700V10c0 1.200-.6 1.700-1.900 1.700" stroke="#e8925a" stroke-width="1.300"/><circle cx="6.500" cy="4.900" r=".9" fill="#e8925a"/><path d="M6.500 7.300v1.200l-.7 1" stroke="#e8925a" stroke-width="1.200"/></svg>
<div class="t" style="left:1016.2px;top:234.17px;font-size:12.2px;color:#e3e3e3;letter-spacing:-0.046px;-webkit-text-stroke:0.32px #e3e3e3;">cognito-idp.us...</div>
<div class="t" style="left:1016.2px;top:254.97px;font-size:12.2px;color:#e3e3e3;letter-spacing:-0.046px;-webkit-text-stroke:0.32px #e3e3e3;">cognito-idp.us...</div>
<div class="t" style="left:1016.6px;top:276.27px;font-size:12.2px;color:#f2b8b5;transform-origin:0 50%;transform:scaleX(0.9548);-webkit-text-stroke:0.32px #f2b8b5;">plan</div>
<div class="t" style="left:1016.6px;top:297.17px;font-size:12.2px;color:#e3e3e3;transform-origin:0 50%;transform:scaleX(0.9548);-webkit-text-stroke:0.32px #e3e3e3;">plan</div>
<svg class="abs" style="left:1123.4px;top:241.8px;" width="7.6" height="4" viewBox="0 0 7.600 4" fill="none"><path d="M.2 .2h7.200L3.800 3.800z" fill="#c7c7c7"/></svg>
<div class="t" style="left:1135.4px;top:239.07px;font-size:11px;color:#e3e3e3;font-family:'Liberation Mono',monospace;letter-spacing:-.015px;-webkit-text-stroke:.3px;">{message: "Couldn't create plan because there is not active association"}</div>
<div class="t" style="left:1147px;top:255.07px;font-size:11px;color:#e3e3e3;font-family:'Liberation Mono',monospace;letter-spacing:-.015px;-webkit-text-stroke:.3px;"><span style="color:#7cacf8">message</span><span style="color:#e3e3e3">: </span><span style="color:#5cd5fb">"Couldn't create plan because there is not active association"</span></div>
<div class="abs" style="left:992.2px;top:757.4px;width:118.3px;height:1px;background:#5a5a5a;"></div>
<div class="t" style="left:1002.8px;top:766.27px;font-size:12.2px;color:#e3e3e3;letter-spacing:-0.257px;-webkit-text-stroke:0.32px #e3e3e3;">4 requests</div>
<div class="abs" style="left:1067px;top:763.4px;width:1px;height:15.6px;background:#5a5a5a;"></div>
<div class="t" style="left:1077.5px;top:766.27px;font-size:12.2px;color:#e3e3e3;transform-origin:0 50%;transform:scaleX(0.8914);-webkit-text-stroke:0.32px #e3e3e3;">1.3 kB</div>
<div class="abs" style="left:992.2px;top:784.3px;width:637px;height:181px;background:#3c3c3c;"></div>
<div class="abs" style="left:992.2px;top:784.3px;width:637px;height:1px;background:#5a5a5a;"></div>
<div class="abs" style="left:992.2px;top:811.2px;width:637px;height:1px;background:#5a5a5a;"></div>
<svg class="abs" style="left:1005.7px;top:791.5px;" width="6" height="14" viewBox="0 0 6 14" fill="none"><circle cx="3" cy="2.200" r="1.500" fill="#c7c7c7"/><circle cx="3" cy="7" r="1.500" fill="#c7c7c7"/><circle cx="3" cy="11.800" r="1.500" fill="#c7c7c7"/></svg>
<div class="t" style="left:1030.9px;top:794.17px;font-size:12.2px;color:#e3e3e3;letter-spacing:-0.253px;-webkit-text-stroke:0.32px #e3e3e3;">Console</div>
<div class="t" style="left:1095.2px;top:794.17px;font-size:12.2px;color:#e3e3e3;transform-origin:0 50%;transform:scaleX(0.9492);-webkit-text-stroke:0.32px #e3e3e3;">AI assistance</div>
<svg class="abs" style="left:1168px;top:793.6px;" width="11.5" height="10.5" viewBox="0 0 11.500 10.500" fill="none"><path d="M3.500 .7h4.500M4.500 .7v3.600L1.200 9.700h9.100L7 4.300V.7" stroke="#c7c7c7" stroke-width="1.100" stroke-linejoin="round"/></svg>
<div class="t" style="left:1213px;top:794.17px;font-size:12.2px;color:#a8c7fa;letter-spacing:0.032px;-webkit-text-stroke:0.32px #a8c7fa;">What's new</div>
<svg class="abs" style="left:1279.6px;top:794.8px;" width="9" height="9" viewBox="0 0 9 9" fill="none"><path d="M.8 .8l7.400 7.400M8.200 .8L.8 8.200" stroke="#d0d0d0" stroke-width="1.100"/></svg>
<div class="abs" style="left:1203.2px;top:809px;width:92.7px;height:3px;background:#a8c7fa;border-radius:2px 2px 0 0;"></div>
<svg class="abs" style="left:1178px;top:828.3px;" width="32" height="32" viewBox="0 0 32 32" fill="none"><circle cx="16" cy="16" r="15.700" fill="#1a73e8"/><circle cx="16" cy="16" r="12.300" stroke="#fff" stroke-width="1.700"/><circle cx="16" cy="16" r="5" stroke="#fff" stroke-width="1.700"/><path d="M16 11h11.300M11.700 18.500L6 8.700M20.300 18.500L14.700 28.200" stroke="#fff" stroke-width="1.700"/></svg>
<div class="t" style="left:1219.6px;top:836.96px;font-size:16px;color:#e8e8e8;font-weight:bold;transform-origin:0 50%;transform:scaleX(0.9386);">What's new in DevTools 135</div>
<div class="abs" style="left:1177.6px;top:875.5px;width:134.8px;height:24.7px;background:#a8c7fa;border-radius:12.400px;"></div>
<div class="t" style="left:1190.4px;top:881.59px;font-size:12.3px;color:#0b2f6b;letter-spacing:-0.143px;">See all new features</div>
<div class="abs" style="left:1157.7px;top:919.7px;width:500px;height:80px;background:#1f1f1f;border-radius:22px;"></div>
<div class="abs" style="left:1177.6px;top:939.6px;width:316px;height:60px;background:#303134;border-radius:11px;"></div>
<div class="abs" style="left:1177.600px;top:939.600px;width:117.200px;height:60px;background:#1a73e8;border-radius:11px 0 0 0;overflow:hidden"><svg width="118" height="60" viewBox="0 0 118 60" fill="none"><circle cx="36" cy="34.500" r="34" stroke="#fff" stroke-width="1.100"/><circle cx="36" cy="34.500" r="22" stroke="#fff" stroke-width="1.300"/><circle cx="36" cy="34.500" r="11" stroke="#fff" stroke-width="1.300"/><path d="M0 8h70M28 0v60M50 0v60M-5 14l80 46M75 -5L10 60" stroke="#fff" stroke-width=".5" opacity=".45"/><circle cx="58" cy="30" r="8" fill="#fff" opacity=".95"/></svg></div>
<div class="abs" style="left:1257.2px;top:952.4px;width:29.4px;height:20px;background:#fff;border-radius:3px;"></div>
<div class="t" style="left:1261.6px;top:955.07px;font-size:11.5px;color:#1a73e8;font-weight:bold;transform-origin:0 50%;transform:scaleX(0.9389);">new</div>
<div class="t" style="left:1306.9px;top:954.47px;font-size:12.2px;color:#f0f0f0;transform-origin:0 50%;transform:scaleX(0.8985);-webkit-text-stroke:0.32px #f0f0f0;">See the highlights from Chrome 135</div>
</div>
</body>
</html>
